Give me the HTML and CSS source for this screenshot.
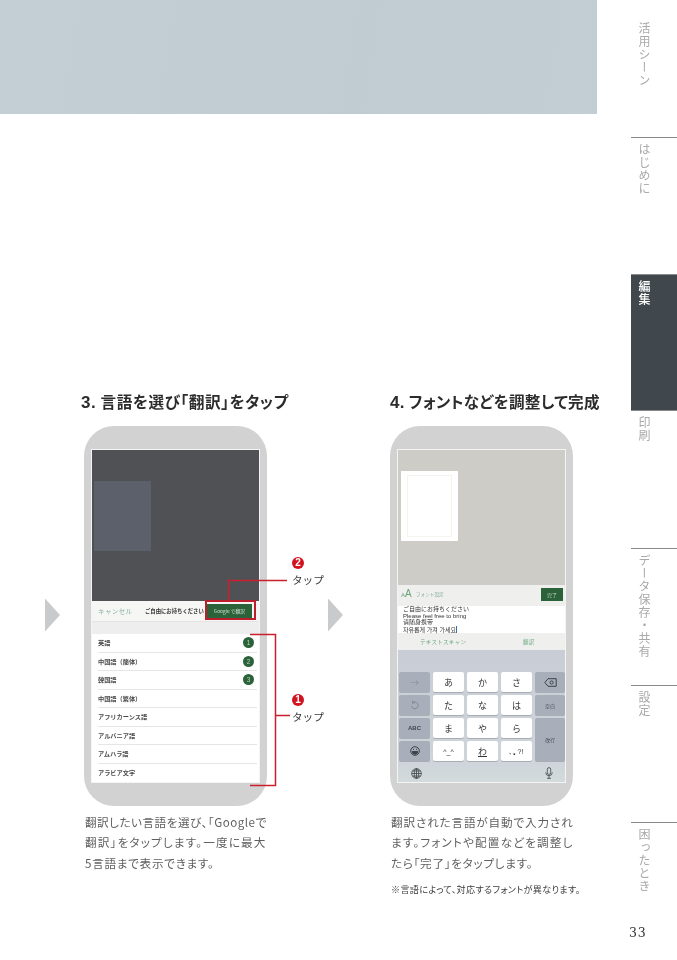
FILE: index.html
```html
<!DOCTYPE html>
<html lang="ja">
<head>
<meta charset="utf-8">
<title>33</title>
<link rel="stylesheet" href="styles.css">
</head>
<body>
<div class="page">
  <main class="main">
    <div class="hero"></div>
    <section class="steps">
      <h2 class="heading heading-a"><b>3.</b> 言語を選び「翻訳」をタップ</h2>
      <h2 class="heading heading-b"><b>4.</b> フォントなどを調整して完成</h2>

      <div class="arrow arrow-a"></div>
      <div class="phone phone-a">
        <div class="screen">
          <div class="photo photo-dark"><div class="photo-card"></div></div>
          <div class="topbar">
            <span class="cancel">キャンセル</span>
            <span class="title">ご自由にお持ちください</span>
            <span class="gbtn">Google で翻訳</span>
          </div>
          <div class="search"></div>
          <ul class="langs">
            <li><span>英語</span><i>1</i></li>
            <li><span>中国語（簡体）</span><i>2</i></li>
            <li><span>韓国語</span><i>3</i></li>
            <li><span>中国語（繁体）</span></li>
            <li><span>アフリカーンス語</span></li>
            <li><span>アルバニア語</span></li>
            <li><span>アムハラ語</span></li>
            <li><span>アラビア文字</span></li>
          </ul>
        </div>
        <div class="redbox"></div>
        <svg class="callouts" width="240" height="240" viewBox="0 0 240 240">
          <path d="M144.500 175V154.500H203" />
          <path d="M166 208.500H191.500V359.500H166M191.500 289.500H206" />
        </svg>
        <div class="tap tap-2"><em>2</em><span>タップ</span></div>
        <div class="tap tap-1"><em>1</em><span>タップ</span></div>
      </div>

      <div class="arrow arrow-b"></div>
      <div class="phone phone-b">
        <div class="screen screen-edit">
          <div class="photo photo-light"><div class="sheet"><div class="sheet-in"></div></div></div>
          <div class="fontbar">
            <span class="aa"><small>A</small>A</span>
            <span class="fontlabel">フォント設定</span>
            <span class="done">完了</span>
          </div>
          <div class="textbox">ご自由にお持ちください<br>Please feel free to bring<br>请随身携带<br>자유롭게 가져 가세요<span class="caret"></span></div>
          <div class="scanbar"><span>テキストスキャン</span><span>翻訳</span></div>
          <div class="keyboard">
            <div class="keys">
              <div class="key fn arrowkey">→</div>
              <div class="key">あ</div>
              <div class="key">か</div>
              <div class="key">さ</div>
              <div class="key fn">
                <svg width="13" height="9" viewBox="0 0 13 9"><path d="M4 .7H12.200V8.300H4L.8 4.500Z" /><circle cx="7.600" cy="4.500" r="1.600" /></svg>
              </div>
              <div class="key fn">
                <svg width="9" height="10" viewBox="0 0 9 10"><path d="M2.500 2.800A3.400 3.400 0 1 1 1.400 6M2.500 .8V3H4.700" /></svg>
              </div>
              <div class="key">た</div>
              <div class="key">な</div>
              <div class="key">は</div>
              <div class="key fn small">空白</div>
              <div class="key fn small abc">ABC</div>
              <div class="key">ま</div>
              <div class="key">や</div>
              <div class="key">ら</div>
              <div class="key fn small enter">改行</div>
              <div class="key fn">
                <svg width="10" height="10" viewBox="0 0 10 10"><circle cx="5" cy="5" r="4.300" /><path d="M2.300 5.500H7.700A2.700 2.700 0 0 1 2.300 5.500Z" class="fill" /><path d="M3 3.300H4M6 3.300H7" /></svg>
              </div>
              <div class="key kao">^_^</div>
              <div class="key wa">わ</div>
              <div class="key punct">､｡?!</div>
            </div>
            <div class="kbfoot">
              <svg width="11" height="11" viewBox="0 0 11 11"><circle cx="5.500" cy="5.500" r="4.800" /><ellipse cx="5.500" cy="5.500" rx="2.200" ry="4.800" /><path d="M5.500 .7V10.300M.7 5.500H10.300M1.400 3H9.600M1.400 8H9.600" /></svg>
              <svg width="8" height="12" viewBox="0 0 8 12"><rect x="2.300" y=".6" width="3.400" height="6.800" rx="1.700" /><path d="M.7 5.400A3.300 3.300 0 0 0 7.300 5.400M4 8.800V11.300M2 11.300H6" /></svg>
            </div>
          </div>
        </div>
      </div>

      <p class="caption caption-a"><span class="tight">翻訳したい言語を選び、「Googleで</span><br><span class="wide">翻訳」をタップします。一度に最大</span><br>5言語まで表示できます。</p>
      <div class="caption-group">
        <p class="caption caption-b"><span class="snug">翻訳された言語が自動で入力され</span><br><span class="wide">ます。フォントや配置などを調整し</span><br>たら「完了」をタップします。</p>
        <p class="note">※言語によって、対応するフォントが異なります。</p>
      </div>
    </section>
  </main>

  <nav class="side">
    <div class="tab tab-first"><span>活用シーン</span></div>
    <div class="tab"><span>はじめに</span></div>
    <div class="tab tab-active"><span>編集</span></div>
    <div class="tab"><span>印刷</span></div>
    <div class="tab"><span>データ保存・共有</span></div>
    <div class="tab"><span>設定</span></div>
    <div class="tab tab-last"><span>困ったとき</span></div>
    <div class="pageno">33</div>
  </nav>
</div>
</body>
</html>
```
FILE: styles.css
```css
* { box-sizing: border-box; }
html, body { margin: 0; padding: 0; background: #fff; }
body {
  width: 677px;
  height: 960px;
  overflow: hidden;
  font-family: "Noto Sans CJK JP", "Noto Sans", sans-serif;
}
.page {
  display: flex;
  width: 677px;
  height: 960px;
  filter: blur(0.3px);
}
.main { width: 597px; flex: none; }
.hero {
  height: 114px;
  background: linear-gradient(100deg, #c4cfd5, #c0ccd2 60%, #c3ced4);
}

/* steps */
.steps {
  display: grid;
  grid-template-columns: 84px 244px 62px 207px;
  grid-template-rows: 24px 392px auto;
  margin-top: 275px;
}
.heading {
  margin: 0;
  font-size: 15.6px;
  line-height: 24px;
  font-weight: 700;
  color: #2c2c2c;
  white-space: nowrap;
  font-feature-settings: "palt";
}
.heading b {
  font-family: "Liberation Sans", sans-serif;
  font-size: 17px;
}
.heading-a { grid-column: 2; grid-row: 1; margin-left: -3px; letter-spacing: .6px; }
.heading-b { grid-column: 4; grid-row: 1; letter-spacing: .3px; }

.arrow {
  align-self: center;
  width: 15px;
  height: 33px;
  margin-top: 12px;
  background: #c9cacb;
  clip-path: polygon(0 0, 100% 50%, 0 100%);
}
.arrow-a { grid-column: 1; grid-row: 2; margin-left: 45px; }
.arrow-b { grid-column: 3; grid-row: 2; }

/* phone */
.phone {
  position: relative;
  width: 183px;
  height: 380px;
  padding: 23px 7px;
  border-radius: 30px;
  background: #d2d2d2;
  margin-top: 13px;
}
.phone-a { grid-column: 2; grid-row: 2; }
.phone-b { grid-column: 4; grid-row: 2; }
.screen {
  display: flex;
  flex-direction: column;
  width: 169px;
  height: 334px;
  background: #fff;
  border: 1px solid #f4f4f4;
  overflow: hidden;
}
.screen-edit { background: #efefee; }
.photo { flex: none; }
.photo-dark { height: 151px; background: #505154; padding: 31px 2px 0; }
.photo-card { width: 57px; height: 70px; background: #5b606a; }

.topbar {
  flex: none;
  display: flex;
  align-items: center;
  height: 21px;
  padding: 0 4px 0 6px;
  background: #f6f6f5;
  border-bottom: 1px solid #e4e4e4;
  white-space: nowrap;
}
.cancel { font-size: 6.5px; color: #86b596; letter-spacing: .4px; width: 47px; }
.title { font-size: 5.35px; font-weight: 700; color: #333; width: 63px; }
.gbtn {
  flex: none;
  width: 45px;
  height: 14px;
  margin-left: -1px;
  background: #2b6239;
  color: #cfe0d3;
  font-size: 4.8px;
  line-height: 14px;
  text-align: center;
}
.search { flex: none; height: 12px; background: #eeeeee; }
.langs {
  list-style: none;
  margin: 0;
  padding: 0 2px 0 6px;
  flex: 1;
}
.langs li {
  display: flex;
  justify-content: space-between;
  align-items: center;
  height: 18.5px;
  padding-right: 3px;
  border-bottom: 1px solid #e6e6e6;
  font-size: 6.2px;
  font-weight: 700;
  color: #4a4a4a;
}
.langs li:last-child { border-bottom: 0; }
.langs i {
  width: 11px;
  height: 11px;
  border-radius: 50%;
  background: #2b6239;
  color: #b9d3c0;
  font-style: normal;
  font-weight: 400;
  font-size: 6.5px;
  line-height: 11px;
  text-align: center;
  font-family: "Liberation Sans", sans-serif;
}

/* call-outs */
.redbox {
  position: absolute;
  left: 121px;
  top: 174px;
  width: 51px;
  height: 20px;
  border: 2px solid #bb1f2d;
}
.callouts {
  position: absolute;
  top: 0;
  left: 0;
  overflow: visible;
  fill: none;
  stroke: #c9202f;
  stroke-width: 1.500;
}
.tap {
  position: absolute;
  left: 208px;
  display: flex;
  flex-direction: column;
  gap: 3px;
  color: #3a3a3a;
  font-size: 10.600px;
  line-height: 15px;
  white-space: nowrap;
}
.tap em {
  width: 12px;
  height: 12px;
  border-radius: 50%;
  background: #d3121f;
  color: #fff;
  font-family: "Liberation Sans", sans-serif;
  font-style: normal;
  font-weight: 700;
  font-size: 10px;
  line-height: 12px;
  text-align: center;
}
.tap-2 { top: 131px; }
.tap-1 { top: 268px; }

/* phone 4 */
.photo-light { height: 135px; background: #cdccc6; padding: 21px 3px 0; }
.sheet { width: 57px; height: 70px; padding: 4px 6px; background: #fff; }
.sheet-in { height: 100%; border: 1px solid #f3f3f0; }
.fontbar {
  flex: none;
  display: flex;
  align-items: center;
  height: 18px;
  padding: 0 2px 0 3px;
}
.aa { color: #6aa27c; font-family: "Liberation Sans", sans-serif; font-size: 10px; line-height: 1; width: 13px; }
.aa small { font-size: 6px; }
.fontlabel { font-size: 4.600px; color: #7fae8f; flex: 1; padding-left: 2px; }
.done {
  width: 22px;
  height: 13px;
  background: #2b6239;
  color: #bcd3c3;
  font-size: 5px;
  line-height: 13px;
  text-align: center;
}
.textbox {
  flex: none;
  height: 27px;
  margin-top: 3px;
  padding: 0 5px;
  background: #fff;
  font-family: "Liberation Sans", "Noto Sans CJK JP", sans-serif;
  font-size: 6px;
  line-height: 6.700px;
  color: #333;
  white-space: nowrap;
}
.caret {
  display: inline-block;
  width: 1px;
  height: 7px;
  background: #3b6ea5;
  vertical-align: -1px;
}
.scanbar {
  flex: none;
  display: flex;
  height: 17px;
  align-items: center;
  font-size: 5.500px;
  color: #6faa83;
  letter-spacing: .3px;
}
.scanbar span:first-child { width: 125px; padding-left: 22px; }
.keyboard {
  flex: 1;
  display: flex;
  flex-direction: column;
  padding: 22px 0 0 1px;
  background: linear-gradient(180deg, #c9ced6 0%, #cfd4da 85%, #d2dbdc 100%);
}
.keys {
  display: grid;
  grid-template-columns: 31px 31px 31px 31px 30px;
  grid-auto-rows: 20px;
  gap: 3px;
  height: 89px;
  flex: none;
}
.key {
  display: flex;
  align-items: center;
  justify-content: center;
  border-radius: 2px;
  background: #fff;
  color: #333;
  font-size: 9px;
  box-shadow: 0 1px 0 #a9adb4;
}
.key.fn { background: #a9afba; color: #40454c; }
.key.small { font-size: 5px; }
.key.abc { font-family: "Liberation Sans", sans-serif; font-size: 6px; font-weight: 700; }
.key.arrowkey { color: #8b919c; }
.key.enter { grid-column: 5; grid-row: 3 / span 2; }
.key svg { fill: none; stroke: #3d4148; stroke-width: 1; }
.key svg .fill { fill: #3d4148; }
.key.fn:nth-child(6) svg { stroke: #838893; }
.kao { font-family: "Liberation Sans", sans-serif; font-size: 7px; }
.wa { text-decoration: underline; }
.punct { font-family: "Liberation Sans", sans-serif; font-size: 7px; letter-spacing: .3px; }
.kbfoot {
  display: flex;
  justify-content: space-between;
  align-items: center;
  padding: 3px 12px 0;
  flex: 1;
}
.kbfoot svg { fill: none; stroke: #3d4148; stroke-width: .8; }

/* captions */
.caption {
  margin: 0;
  font-size: 11.600px;
  line-height: 20.300px;
  letter-spacing: .72px;
  color: #5f5f5f;
  white-space: nowrap;
  font-feature-settings: "palt";
}
.caption .tight { letter-spacing: .5px; }
.caption .snug { letter-spacing: .85px; }
.caption .wide { letter-spacing: 1.18px; }
.caption-a { grid-column: 2; grid-row: 3; margin-top: 7px; margin-left: 1px; }
.caption-group { grid-column: 4; grid-row: 3; margin-top: 7px; margin-left: 1px; }
.note {
  margin: 9px 0 0;
  font-size: 9.100px;
  line-height: 14px;
  color: #3d3d3d;
  white-space: nowrap;
  font-feature-settings: "palt";
  letter-spacing: .33px;
}

/* side tabs */
.side { width: 80px; flex: none; display: flex; flex-direction: column; }
.tab {
  width: 46px;
  height: 137px;
  margin-left: 34px;
  padding: 5px 0 0 7px;
  border-top: 1px solid #8a8a8a;
  font-size: 12px;
  line-height: 12px;
  letter-spacing: 1px;
  color: #a9a9a9;
}
.tab span { display: block; width: 12px; writing-mode: vertical-rl; }
.tab-first { border-top: 0; padding-top: 22px; }
.tab-active {
  background: #40474d;
  color: #fff;
  font-weight: 500;
  border-bottom: 1px solid #8a8a8a;
}
.tab-active + .tab { border-top: 0; }
.tab-last { height: 101px; }
.pageno {
  margin-left: 32px;
  font-family: "DejaVu Serif", serif;
  font-size: 12.500px;
  line-height: 20px;
  letter-spacing: .7px;
  color: #333;
}
```
